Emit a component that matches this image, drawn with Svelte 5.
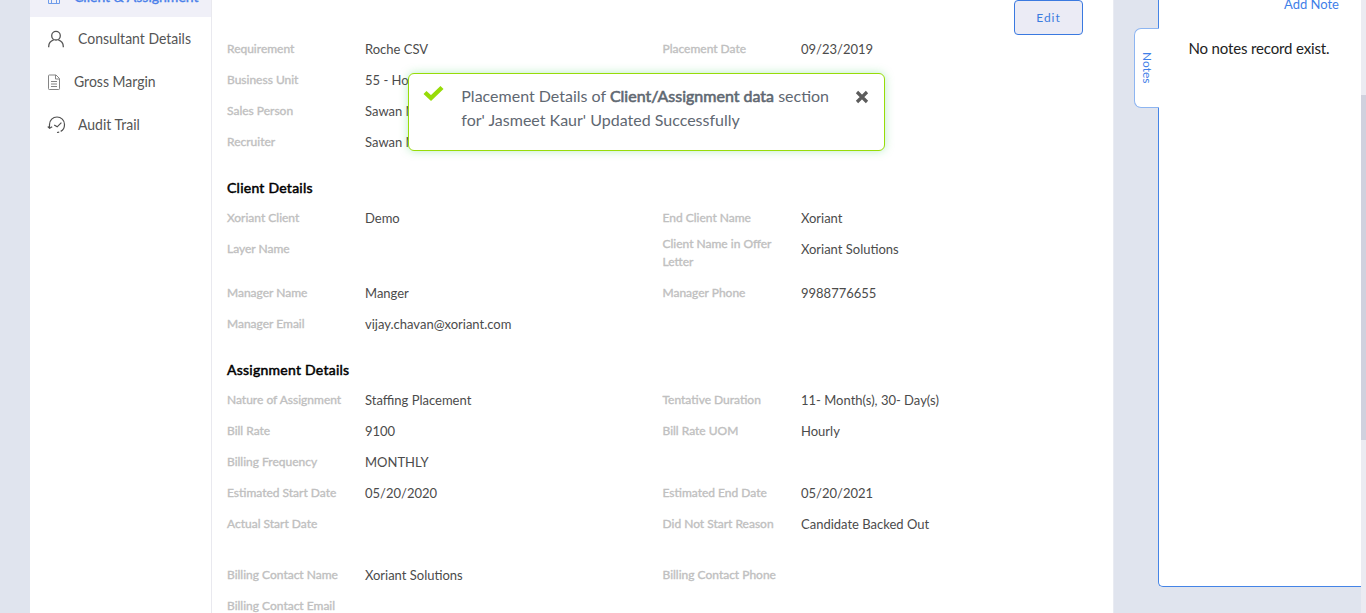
<script>
  const general = [
    ['Requirement', 'Roche CSV', 'Placement Date', '09/23/2019'],
    ['Business Unit', '55 - Hourly', '', ''],
    ['Sales Person', 'Sawan M', '', ''],
    ['Recruiter', 'Sawan M', '', '']
  ];
  const client = [
    ['Xoriant Client', 'Demo', 'End Client Name', 'Xoriant'],
    ['Layer Name', '', 'Client Name in Offer Letter', 'Xoriant Solutions'],
    ['Manager Name', 'Manger', 'Manager Phone', '9988776655'],
    ['Manager Email', 'vijay.chavan@xoriant.com', '', '']
  ];
  const assignment = [
    ['Nature of Assignment', 'Staffing Placement', 'Tentative Duration', '11- Month(s), 30- Day(s)'],
    ['Bill Rate', '9100', 'Bill Rate UOM', 'Hourly'],
    ['Billing Frequency', 'MONTHLY', '', ''],
    ['Estimated Start Date', '05/20/2020', 'Estimated End Date', '05/20/2021'],
    ['Actual Start Date', '', 'Did Not Start Reason', 'Candidate Backed Out']
  ];
  const billing = [
    ['Billing Contact Name', 'Xoriant Solutions', 'Billing Contact Phone', ''],
    ['Billing Contact Email', '', '', '']
  ];
</script>

{#snippet rows(list)}
  {#each list as [l1, v1, l2, v2]}
    <div class="row" class:tall={l2.length > 25}>
      <span class="label">{l1}</span><span class="value">{v1}</span>
      <span class="label second">{l2}</span><span class="value">{v2}</span>
    </div>
  {/each}
{/snippet}

<div class="page">
  <nav class="sidebar">
    <a class="item active" href="#client">
      <svg width="20" height="20" viewBox="0 0 20 20" fill="none" stroke="#6f9cea"><path d="M4.500 4.500h11v13h-11zM7.500 17v-3.500h5V17M7 9.500h2M11 9.500h2" /></svg>
      <span>Client &amp; Assignment</span>
    </a>
    <a class="item" href="#consultant">
      <svg width="20" height="20" viewBox="0 0 20 20" fill="none" stroke="#555" stroke-width="1.3"><circle cx="10" cy="6.7" r="4.3" /><path d="M2.700 18.200v-.7c0-3.600 2.300-5.800 5-6.700M17.300 18.200v-.7c0-3.600-2.300-5.800-5-6.700" /></svg>
      <span>Consultant Details</span>
    </a>
    <a class="item" href="#margin">
      <svg width="20" height="20" viewBox="0 0 20 20" fill="none" stroke="#858585"><path d="M3.300 3h6.700l3.500 3.500v10.200q0 .8-.8.8H3.300q-.8 0-.8-.8V3.800q0-.8.8-.8M9.500 3v4h4M5 9.500h6M5 12h6M5 14.500h6" /></svg>
      <span class="near">Gross Margin</span>
    </a>
    <a class="item" href="#audit">
      <svg width="20" height="20" viewBox="0 0 20 20" fill="none" stroke="#505050" stroke-width="1.200"><path d="M3.500 13V9.500A7.500 7.500 0 0 1 18.500 9.500Q18.500 14.500 14.700 16.400M13.200 17.100l-2.200.4" /><path d="M1.800 11.500l1.800 1.800 2.600-1.600M8.200 9.900l3 1.900 4.200-4.200" /></svg>
      <span>Audit Trail</span>
    </a>
  </nav>

  <main class="content">
    <button class="edit">Edit</button>
    {@render rows(general)}
    <h2>Client Details</h2>
    {@render rows(client)}
    <h2>Assignment Details</h2>
    {@render rows(assignment)}
    <div class="gap"></div>
    {@render rows(billing)}
  </main>

  <aside class="notes">
    <button class="add">Add Note</button>
    <p>No notes record exist.</p>
    <div class="tab"><span>Notes</span></div>
  </aside>

  <div class="scroll"><div class="thumb"></div></div>

  <div class="toast">
    <svg class="check" width="22" height="18" viewBox="0 0 22 18"><path d="M2 8.500l6 5.500L19 3.500" fill="none" stroke="#97dc08" stroke-width="4.400" /></svg>
    <p>Placement Details of <b>Client/Assignment data</b> section<br />for' Jasmeet Kaur' Updated Successfully</p>
    <svg class="close" width="14" height="14" viewBox="0 0 14 14"><path d="M2 2l10 10M12 2L2 12" stroke="#5c5c5c" stroke-width="3.200" /></svg>
  </div>
</div>

<style>
  :global(body) { margin: 0; overflow: hidden; }
  .page {
    position: relative;
    display: flex;
    height: 613px;
    padding-left: 30px;
    box-sizing: border-box;
    overflow: hidden;
    background: #e0e4ee;
    font-family: Lato, sans-serif;
    color: #4b4b4b;
  }
  button { font: inherit; cursor: pointer; }
  .sidebar { width: 181px; flex: none; background: #fff; border-right: 1px solid #e9e9ef; }
  .item {
    display: flex;
    align-items: center;
    height: 43px;
    padding-left: 16px;
    gap: 11.500px;
    font-size: 15px;
    line-height: 18px;
    color: #555;
    text-decoration: none;
    white-space: nowrap;
  }
  .item svg { flex: none; }
  .item span { margin-top: -1px; transform: scaleX(.933); transform-origin: left; }
  .item.active { margin-top: -26px; background: #f0f0f8; color: #4a80ea; padding-left: 14px; gap: 10px; font-size: 14px; -webkit-text-stroke: .4px; }
  .item.active span { margin-top: 2px; transform: none; }
  .item.active svg { margin-top: 1px; }
  .item .near { margin-left: -4px; }
  .content { width: 886px; height: 613px; flex: none; background: #fff; border-right: 1px solid #e9ebf2; padding-left: 15px; overflow: hidden; }
  .edit {
    display: block;
    width: 69px;
    height: 35px;
    margin: 0 30px -2px auto;
    border: 1px solid #3a79e0;
    border-radius: 4px;
    background: #ebebf5;
    color: #3b7be0;
    font-size: 12px;
    letter-spacing: 1px;
    padding: 0;
  }
  .row { display: grid; grid-template-columns: 138px 297.500px 138.500px 1fr; height: 31px; align-items: start; white-space: nowrap; }
  .row.tall { height: 44px; }
  .label { font-size: 12px; line-height: 18px; padding-top: 7px; color: #c0c0c0; -webkit-text-stroke: .35px; }
  .tall .second { padding-top: 2px; width: 120px; white-space: normal; }
  .value { font-size: 13px; line-height: 18px; padding-top: 7px; }
  h2 { margin: 0; height: 45px; padding-top: 22px; box-sizing: border-box; font-size: 14px; line-height: 18px; font-weight: 400; letter-spacing: .25px; color: #000; -webkit-text-stroke: .5px; }
  .gap { height: 20px; }
  .notes {
    position: relative;
    width: 202px;
    height: 586px;
    flex: none;
    margin-left: 44px;
    background: #fff;
    border: solid #4584e6;
    border-width: 0 0 1px 1px;
    border-bottom-left-radius: 5px;
  }
  .add { display: block; border: 0; background: none; padding: 0; margin: -6px 22px 0 auto; height: 20px; font-size: 13px; color: #3f80e8; }
  .notes p { margin: 24px 0 0 29.500px; font-size: 15px; line-height: 20px; letter-spacing: -.15px; color: #222; white-space: nowrap; }
  .tab {
    position: absolute;
    left: -25px;
    top: 28px;
    width: 24px;
    height: 78px;
    display: flex;
    align-items: center;
    justify-content: center;
    border: 1px solid #8db5f1;
    border-right: 0;
    border-radius: 7px 0 0 7px;
    background: #fff;
    color: #3f80e8;
    font-size: 12px;
  }
  .tab span { writing-mode: vertical-rl; }
  .scroll { width: 5px; flex: none; background: #ebebf2; padding-top: 95px; }
  .thumb { height: 345px; background: #d0d1de; }
  .toast {
    position: absolute;
    left: 408px;
    top: 73px;
    width: 477px;
    height: 78px;
    box-sizing: border-box;
    display: flex;
    padding: 10px 15px 0 14.300px;
    border: 1px solid #97dc08;
    border-radius: 6px;
    background: #fff;
    box-shadow: 0 0 10px rgba(80, 210, 110, .4);
    color: #5f6872;
  }
  .check { flex: none; }
  .toast p { flex: 1; margin: 0 0 0 16px; font-size: 16px; line-height: 24px; white-space: nowrap; }
  .toast b { font-weight: 400; -webkit-text-stroke: .6px; }
  .close { flex: none; margin-top: 6px; }
</style>
